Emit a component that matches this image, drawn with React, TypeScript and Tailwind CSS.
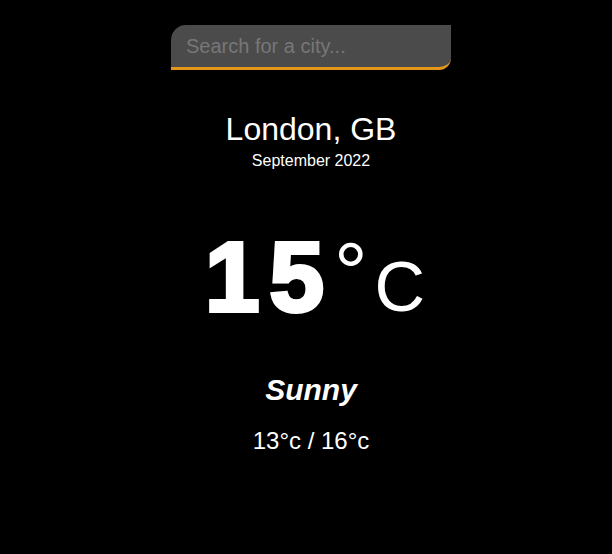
const font = { fontFamily: '"Liberation Sans", Arial, sans-serif' }

export default function App() {
  return (
    <div className="min-h-[554px] w-full bg-black pl-[10px] text-white" style={font}>
      <div className="flex flex-col items-center pt-[25px]">
        <input
          type="text"
          placeholder="Search for a city..."
          className="h-[45px] w-[280px] rounded-tl-[15px] rounded-br-[12px] border-b-[3px] border-[#e3961a] bg-[#4b4b4b] px-[15px] text-[20px] text-white outline-none placeholder:text-[#777777]"
        />

        <h1 className="mt-[43px] text-[32px] leading-none">London, GB</h1>
        <p className="mt-[8px] text-[16px] leading-none">September 2022</p>

        <div className="mt-[59px] ml-[8px] flex items-baseline leading-none">
          <span className="text-[98px] font-bold tracking-[10px] [-webkit-text-stroke:4px_white]">15</span>
          <span className="relative -top-[10px] text-[84px]">°</span>
          <span className="ml-[7px] text-[70px]">C</span>
        </div>

        <p className="mt-[49px] text-[30px] font-bold italic leading-none">Sunny</p>
        <p className="mt-[24px] text-[24px] leading-none">13°c / 16°c</p>
      </div>
    </div>
  )
}
